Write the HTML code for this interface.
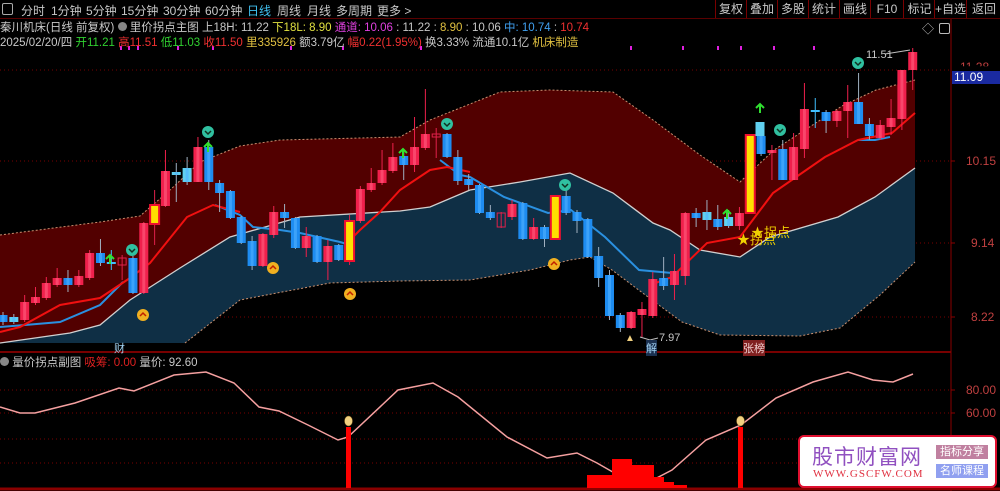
<!DOCTYPE html>
<html><head><meta charset="utf-8"><style>
html,body{margin:0;padding:0;background:#000;width:1000px;height:491px;overflow:hidden;font-family:"Liberation Sans","Noto Sans CJK SC",sans-serif;}
.abs{position:absolute;white-space:nowrap;}
#tb{position:absolute;left:0;top:0;width:1000px;height:18px;border-bottom:1px solid #5a0000;}
#tb span{position:absolute;top:2px;font-size:12px;color:#c8c8c8;}
.btn{position:absolute;top:0;height:18px;border-left:1px solid #7a0000;font-size:12px;color:#c8c8c8;text-align:center;line-height:18px;}
.l1{position:absolute;top:19px;left:0;font-size:11.5px;color:#c8c8c8;}
.l2{position:absolute;top:34px;left:0;font-size:11.5px;color:#c8c8c8;}
</style></head><body>
<svg id="s" width="1000" height="491" style="position:absolute;left:0;top:0">
<!-- grid -->
<g stroke="#7a0000" stroke-dasharray="1,3" stroke-width="1">
<line x1="0" y1="70" x2="950" y2="70"/><line x1="0" y1="161" x2="950" y2="161"/><line x1="0" y1="243" x2="950" y2="243"/><line x1="0" y1="317" x2="950" y2="317"/>
<line x1="0" y1="390" x2="950" y2="390"/><line x1="0" y1="413" x2="950" y2="413"/><line x1="0" y1="439" x2="950" y2="439"/><line x1="0" y1="463" x2="950" y2="463"/>
</g>
<polygon fill="#520000" points="0,235 100,222 140,216 170,190 200,162 240,146 280,140 400,137 430,120 480,100 500,92 550,90 613,92 653,120 700,155 740,182 774,150 808,128 842,106 876,90 915,80 915,168 875,197 838,217 770,237 740,257 700,250 670,230 653,223 613,193 570,173 520,182 470,190 430,207 400,211 300,217 230,237 180,268 130,300 100,325 70,333 0,343"/>
<polygon fill="#0f2f45" points="0,343 70,333 100,325 130,300 180,268 230,237 300,217 400,211 430,207 470,190 520,182 570,173 613,193 653,223 670,230 700,250 740,257 770,237 838,217 875,197 915,168 915,262 880,295 840,328 800,336 720,335 682,322 652,300 612,270 590,257 570,260 530,270 470,280 400,281 330,283 240,300 185,343"/>
<polyline fill="none" stroke="#c89070" stroke-dasharray="2,2" points="0,235 100,222 140,216 170,190 200,162 240,146 280,140 400,137 430,120 480,100 500,92 550,90 613,92 653,120 700,155 740,182 774,150 808,128 842,106 876,90 915,80"/>
<polyline fill="none" stroke="#d0d0d0" stroke-width="1.3" points="0,343 70,333 100,325 130,300 180,268 230,237 300,217 400,211 430,207 470,190 520,182 570,173 613,193 653,223 670,230 700,250 740,257 770,237 838,217 875,197 915,168"/>
<polyline fill="none" stroke="#c89070" stroke-dasharray="2,2" points="185,343 240,300 330,283 400,281 470,280 530,270 570,260 590,257 612,270 652,300 682,322 720,335 800,336 840,328 880,295 915,262"/>
<polyline fill="none" stroke="#2a90e0" stroke-width="2" points="0,327 25,325 60,322 100,305 123,282"/>
<polyline fill="none" stroke="#2a90e0" stroke-width="2" points="215,205 240,215 253,227 280,230 300,233 340,242 350,245"/>
<polyline fill="none" stroke="#2a90e0" stroke-width="2" points="440,160 460,175 470,177 504,197 548,213 571,210 605,237 639,270 672,273"/>
<polyline fill="none" stroke="#2a90e0" stroke-width="2" points="858,140 875,140 890,137"/>
<polyline fill="none" stroke="#f01010" stroke-width="2" points="0,332 20,327 60,305 100,298 127,280 150,263 187,217 213,205 240,212"/>
<polyline fill="none" stroke="#f01010" stroke-width="2" points="350,240 360,230 380,212 400,190 430,170 447,167 470,172"/>
<polyline fill="none" stroke="#f01010" stroke-width="2" points="650,285 672,277 707,243 740,237 773,193 825,157 858,140 892,133 915,113"/>
<g id="cd"></g>
<!-- markers -->
<g id="mk"></g>
<!-- dividers -->
<line x1="0" y1="352" x2="951" y2="352" stroke="#a00000" stroke-width="1.5"/>
<line x1="951" y1="18" x2="951" y2="491" stroke="#8a0000"/>
<line x1="0" y1="489" x2="1000" y2="489" stroke="#8a0000" stroke-width="3"/>
<!-- sub chart -->
<polyline fill="none" stroke="#f5a0a0" stroke-width="1.5" points="0,407 20,413 35,413 75,403 119,388 134,391 174,375 206,372 234,383 259,407 279,411 308,425 338,440 348,437 398,390 433,383 458,397 507,437 547,458 577,453 597,463 632,483 647,483 672,470 706,440 741,425 776,398 813,382 848,372 873,380 893,382 913,374"/>
<rect x="346" y="427" width="5" height="61" fill="#f00"/><rect x="738" y="427" width="5" height="61" fill="#f00"/>
<g fill="#f00"><rect x="587" y="475" width="25" height="13"/><rect x="612" y="459" width="20" height="29"/><rect x="632" y="465" width="22" height="23"/><rect x="654" y="477" width="10" height="11"/><rect x="664" y="482" width="10" height="6"/><rect x="674" y="485" width="13" height="3"/></g>
<g fill="#f0d080" stroke="#806020" stroke-width=".5"><ellipse cx="348.5" cy="421" rx="4" ry="5"/><ellipse cx="740.5" cy="421" rx="4" ry="5"/></g>
<g stroke="#8a0000"><line x1="951" y1="390" x2="955" y2="390"/><line x1="951" y1="413" x2="955" y2="413"/><line x1="951" y1="161" x2="955" y2="161"/><line x1="951" y1="243" x2="955" y2="243"/><line x1="951" y1="317" x2="955" y2="317"/></g>
<polyline fill="none" stroke="#c0c0c0" points="885,54 910,50"/>
<polyline fill="none" stroke="#c0c0c0" points="640,337 650,340 658,338"/>
</svg>
<script>
var D=[[1,'b',315,322,312,325],[2,'l',317,322,314,324],[3,'r',302,320,295,322],[4,'r',297,303,287,305],[5,'r',283,298,277,300],[6,'r',278,285,268,287],[7,'b',278,285,270,292],[8,'r',276,285,270,287],[9,'r',253,278,250,280],[10,'b',253,263,239,266],[11,'c',262,264,250,270],[12,'h',258,265,255,280],[13,'b',258,293,256,294],[14,'r',223,293,222,294],[15,'y',205,224,190,245],[16,'r',171,206,150,207],[17,'l',172,175,163,202],[18,'l',168,182,157,185],[19,'r',147,182,137,182],[20,'b',147,182,140,190],[21,'b',183,193,180,212],[22,'b',191,218,190,219],[23,'b',217,243,216,244],[24,'b',241,266,236,270],[25,'r',234,266,233,267],[26,'r',212,235,206,238],[27,'b',212,218,204,228],[28,'b',218,248,217,249],[29,'r',236,248,227,257],[30,'b',236,262,235,263],[31,'r',246,262,240,280],[32,'b',245,260,244,261],[33,'y',221,261,215,265],[34,'r',189,221,186,223],[35,'r',183,190,168,192],[36,'r',170,183,150,185],[37,'r',157,171,143,173],[38,'b',156,165,150,180],[39,'r',147,165,117,172],[40,'r',134,148,89,150],[41,'h',134,137,128,158],[42,'b',134,157,133,158],[43,'b',157,181,150,185],[44,'b',179,185,174,190],[45,'b',185,213,184,214],[46,'b',212,218,205,220],[47,'h',213,227,212,228],[48,'r',204,217,200,220],[49,'b',203,239,202,240],[50,'r',227,239,218,240],[51,'b',227,239,225,247],[52,'y',196,239,195,240],[53,'b',196,213,190,215],[54,'b',212,221,210,233],[55,'b',219,257,218,258],[56,'b',256,278,247,287],[57,'b',275,316,270,320],[58,'b',315,328,313,332],[59,'r',312,328,311,329],[60,'r',309,315,302,337],[61,'r',279,316,272,318],[62,'b',278,286,257,290],[63,'r',271,285,254,300],[64,'r',213,276,212,285],[65,'b',213,218,208,227],[66,'l',212,220,200,230],[67,'b',219,227,205,230],[68,'l',217,226,210,228],[69,'r',213,226,207,230],[70,'y',135,213,134,214],[71,'b',136,154,122,156],[72,'r',150,153,145,180],[73,'b',149,180,140,180],[74,'r',147,180,133,180],[75,'r',109,149,83,158],[76,'c',110,112,98,128],[77,'b',112,121,110,133],[78,'r',111,121,110,127],[79,'r',102,111,85,138],[80,'b',102,124,73,124],[81,'b',124,136,118,140],[82,'r',125,138,120,140],[83,'r',118,127,99,135],[84,'r',70,119,70,130],[85,'r',52,70,48,90]];
var N='http://www.w3.org/2000/svg',g=document.getElementById('cd');
function el(t,a){var e=document.createElementNS(N,t);for(var k in a)e.setAttribute(k,a[k]);g.appendChild(e);return e;}
D.forEach(function(d){var x=3+(d[0]-1)*10.83,t=d[1];
var col={r:'#f0204c',b:'#1e8cf0',y:'#ffe000',l:'#60d0f0',h:'#e0204a',c:'#40c0ff'}[t];
el('line',{x1:x,y1:d[4],x2:x,y2:d[5],stroke:t=='b'||t=='l'?'#a0b0c0':(t=='y'?'#e0204a':col),'stroke-width':1});
if(t=='h'){el('rect',{x:x-4,y:d[2],width:8,height:Math.max(d[3]-d[2],2),fill:'none',stroke:col});}
else if(t=='y'){el('rect',{x:x-4.5,y:d[2],width:9,height:d[3]-d[2],fill:'#ffe000',stroke:'#f01030','stroke-width':2});}
else if(t=='c'){el('rect',{x:x-4.5,y:d[2],width:9,height:2,fill:col});}
else{el('rect',{x:x-4.5,y:d[2],width:9,height:Math.max(d[3]-d[2],2),fill:col});
el('rect',{x:x-1.5,y:d[2],width:3,height:Math.max(d[3]-d[2],2),fill:t=='r'?'#ff6080':'#50b0ff',opacity:.6});}
});
el('rect',{x:760-4.5,y:122,width:9,height:14,fill:'#60d0f0'});
g=document.getElementById('mk');
[[132,250],[208,132],[447,124],[565,185],[780,130],[858,63]].forEach(function(p){el('circle',{cx:p[0],cy:p[1],r:6,fill:'#30c0a0'});el('polyline',{points:(p[0]-3)+','+(p[1]-1)+' '+p[0]+','+(p[1]+2)+' '+(p[0]+3)+','+(p[1]-1),fill:'none',stroke:'#103020','stroke-width':1.5});});
[[143,315],[273,268],[350,294],[554,264]].forEach(function(p){el('circle',{cx:p[0],cy:p[1],r:6,fill:'#f0b020'});el('polyline',{points:(p[0]-3)+','+(p[1]+1)+' '+p[0]+','+(p[1]-2)+' '+(p[0]+3)+','+(p[1]+1),fill:'none',stroke:'#c02000','stroke-width':1.5});});
[[110,255],[208,143],[403,149],[727,210],[760,104]].forEach(function(p){el('polyline',{points:(p[0]-4)+','+(p[1]+4)+' '+p[0]+','+p[1]+' '+(p[0]+4)+','+(p[1]+4),fill:'none',stroke:'#30e030','stroke-width':2});el('line',{x1:p[0],y1:p[1],x2:p[0],y2:p[1]+9,stroke:'#30e030','stroke-width':2});});
[120,128,137,177,212,290,342,420,630,682,717,740,773,813].forEach(function(x){el('rect',{x:x,y:46,width:2,height:4,fill:'#e020e0'});});
</script>
<div id="tb">
<span style="left:2px;top:3px;width:9px;height:10px;border:1px solid #aaa;border-radius:2px"></span>
<span style="left:21px">分时</span><span style="left:51px">1分钟</span><span style="left:86px">5分钟</span><span style="left:121px">15分钟</span><span style="left:163px">30分钟</span><span style="left:205px">60分钟</span><span style="left:247px;color:#40c0f0">日线</span><span style="left:277px">周线</span><span style="left:307px">月线</span><span style="left:336px">多周期</span><span style="left:377px">更多 &gt;</span>
<div class="btn" style="left:715px;width:30px">复权</div><div class="btn" style="left:746px;width:30px">叠加</div><div class="btn" style="left:777px;width:30px">多股</div><div class="btn" style="left:808px;width:30px">统计</div><div class="btn" style="left:839px;width:30px">画线</div><div class="btn" style="left:870px;width:32px">F10</div><div class="btn" style="left:903px;width:31px">标记</div><div class="btn" style="left:934px;width:31px">+自选</div><div class="btn" style="left:966px;width:34px">返回</div>
</div>
<div class="l1">秦川机床(日线 前复权) <span style="display:inline-block;width:9px;height:9px;border-radius:50%;background:#888"></span> 里价拐点主图 上18H: 11.22 <span style="color:#e0e040">下18L: 8.90</span> <span style="color:#e040e0">通道: 10.06</span> : 11.22 : <span style="color:#e0c040">8.90</span> : 10.06 <span style="color:#40a0f0">中: 10.74</span> : <span style="color:#f03030">10.74</span></div>
<div class="l2">2025/02/20/四 <span style="color:#30d030">开11.21</span> <span style="color:#f03030">高11.51</span> <span style="color:#30d030">低11.03</span> <span style="color:#f03030">收11.50</span> <span style="color:#e0c040">里335926</span> 额3.79亿 <span style="color:#f03030">幅0.22(1.95%)</span> 换3.33% 流通10.1亿 <span style="color:#e0c040">机床制造</span></div>
<div class="abs" style="left:922px;top:20px;color:#bbb;font-size:12px">◇</div>
<div class="abs" style="left:939px;top:23px;width:9px;height:9px;border:1px solid #bbb;border-radius:2px"></div>
<div class="abs" style="left:952px;top:71px;width:48px;height:13px;background:#1a2aa0;color:#fff;font-size:12px;line-height:13px;padding-left:2px">11.09</div>
<div class="abs" style="left:960px;top:60px;color:#c04040;font-size:12px;clip-path:inset(0 0 55% 0)">11.28</div>
<div class="abs" style="left:966px;top:154px;color:#c04040;font-size:12px">10.15</div>
<div class="abs" style="left:971px;top:236px;color:#c04040;font-size:12px">9.14</div>
<div class="abs" style="left:971px;top:310px;color:#c04040;font-size:12px">8.22</div>
<div class="abs" style="left:966px;top:383px;color:#c04040;font-size:12px">80.00</div>
<div class="abs" style="left:966px;top:406px;color:#c04040;font-size:12px">60.00</div>
<div class="abs" style="left:866px;top:49px;color:#c8c8c8;font-size:11px">11.51</div>
<div class="abs" style="left:659px;top:332px;color:#c8c8c8;font-size:11px">7.97</div>
<div class="abs" style="left:625px;top:333px;color:#f0d080;font-size:10px">▲</div>
<div class="abs" style="left:114px;top:340px;color:#a0d0f0;font-size:11px">财</div>
<div class="abs" style="left:646px;top:340px;color:#a0d0f0;font-size:11px;background:#1a3050">解</div>
<div class="abs" style="left:743px;top:340px;color:#f0d0d0;font-size:11px;background:#802020">张榜</div>
<div class="abs" style="left:751px;top:222px;color:#f0d000;font-size:13px">★拐点</div>
<div class="abs" style="left:737px;top:229px;color:#f0d000;font-size:13px">★拐点</div>
<div class="abs" style="left:0px;top:354px;font-size:11.5px;color:#c8c8c8"><span style="display:inline-block;width:9px;height:9px;border-radius:50%;background:#888"></span> 量价拐点副图 <span style="color:#e02020">吸筹: 0.00</span> 量价: 92.60</div>
<div class="abs" style="left:798px;top:435px;width:195px;height:49px;background:#fff;border:2px solid #e01030;border-radius:6px"></div>
<div class="abs" style="left:812px;top:441px;font-size:21px;color:#9050c0;letter-spacing:1px">股市财富网</div>
<div class="abs" style="left:813px;top:468px;font-size:11px;color:#e03040;font-family:'Liberation Serif',serif;letter-spacing:1px">WWW.GSCFW.COM</div>
<div class="abs" style="left:936px;top:445px;width:52px;height:14px;background:#c080a0;color:#fff;font-size:11px;line-height:14px;text-align:center">指标分享</div>
<div class="abs" style="left:936px;top:464px;width:52px;height:14px;background:#90a0f0;color:#fff;font-size:11px;line-height:14px;text-align:center">名师课程</div>
</body></html>
